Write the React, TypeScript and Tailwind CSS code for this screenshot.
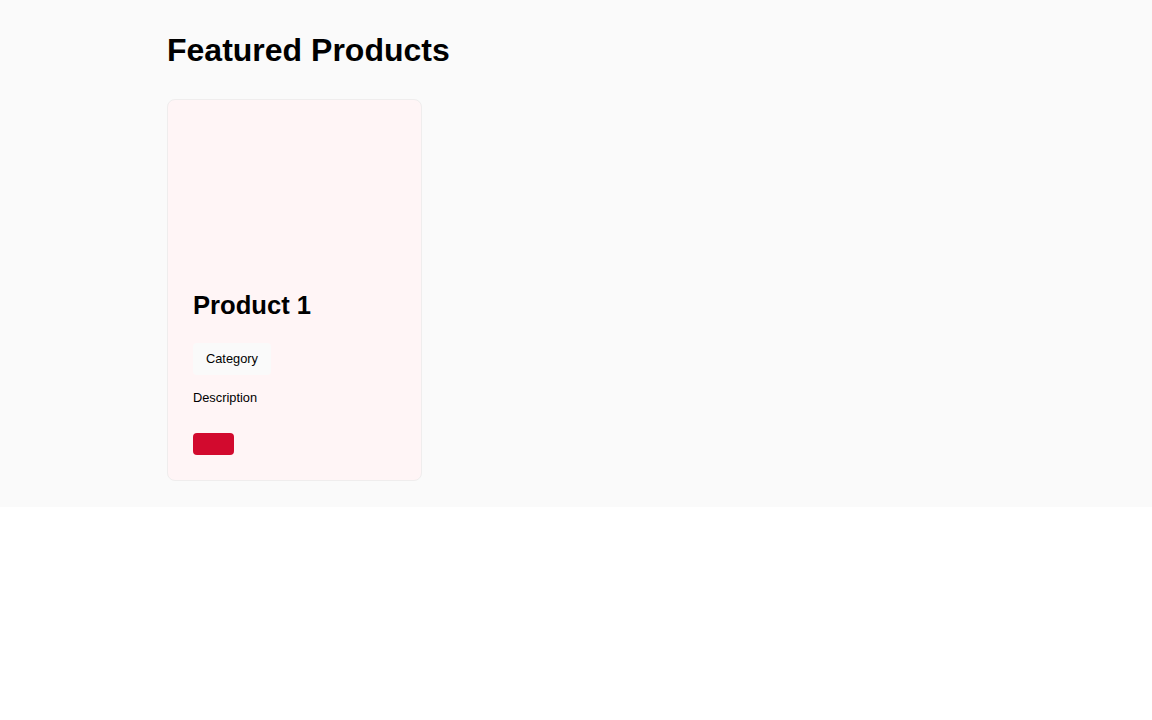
import React from "react";

export default function App() {
  return (
    <div className="w-full min-h-[720px] bg-white" style={{ fontFamily: '"Liberation Sans", Arial, sans-serif' }}>
      <section className="bg-[#fafafa] pt-8 pb-[26px]">
        <div className="mx-auto max-w-[818px]">
          <h1 className="text-[32px] leading-[36px] font-bold text-black mb-[31px]">Featured Products</h1>
          <div className="grid grid-cols-[255px] gap-6">
            <div className="rounded-lg border border-[#efeded] bg-[#fff5f6] px-[25px] pt-6 pb-[25px]">
              <div className="h-[165px]" />
              <h2 className="text-[25.6px] leading-8 font-bold text-black">Product 1</h2>
              <div className="mt-[22px] flex">
                <span className="rounded bg-[#fafafa] px-[13px] py-[6px] text-[12.8px] leading-5 text-black">Category</span>
              </div>
              <p className="mt-[13px] text-[12.8px] leading-5 text-black">Description</p>
              <button className="mt-[25px] block h-[22px] w-[41px] rounded bg-[#d20a2e]" />
            </div>
          </div>
        </div>
      </section>
    </div>
  );
}
